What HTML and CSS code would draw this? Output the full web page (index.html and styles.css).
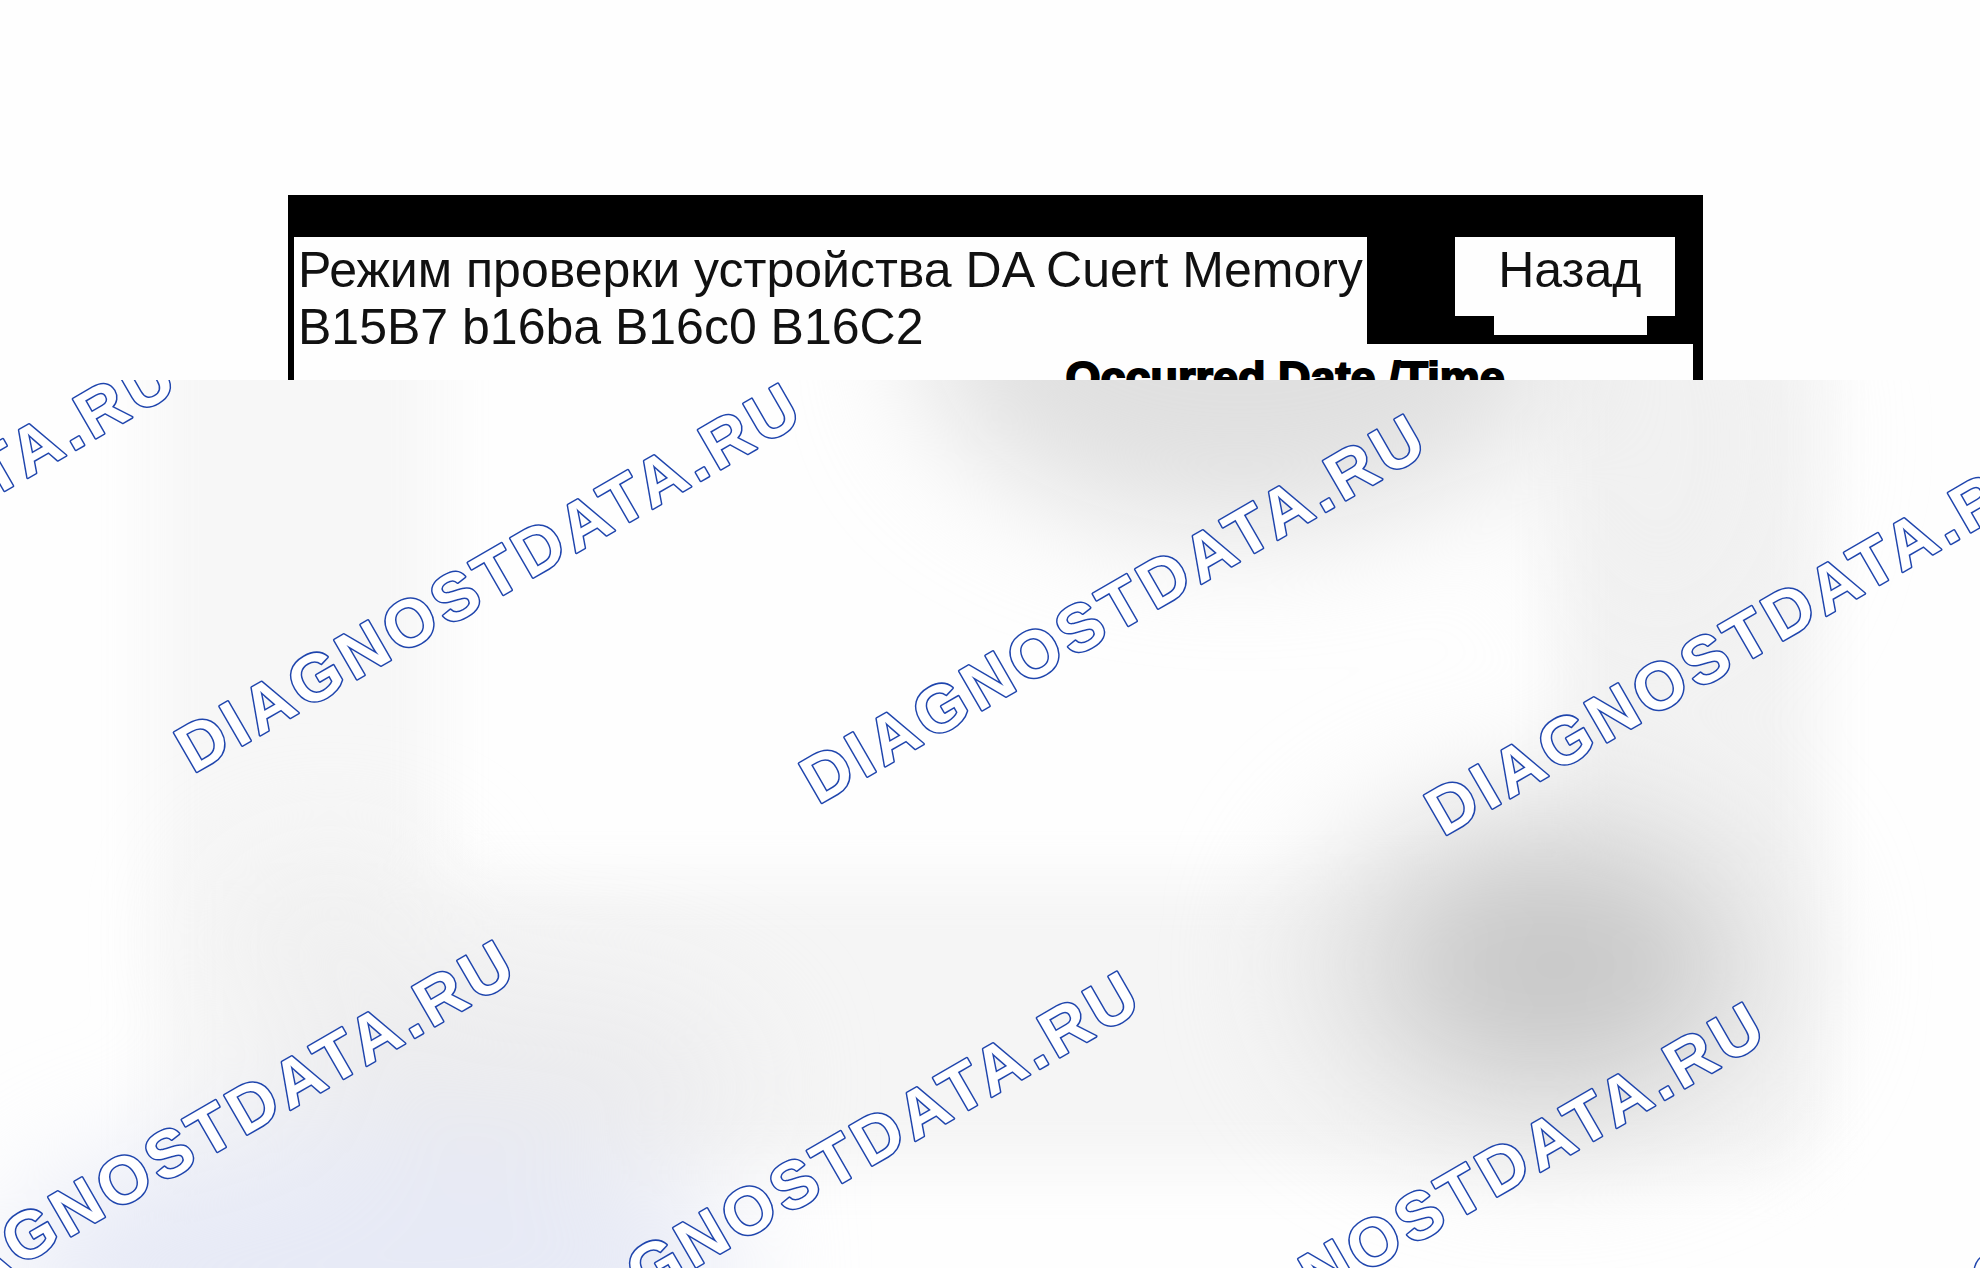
FILE: index.html
```html
<!DOCTYPE html>
<html lang="ru">
	<head>
		<title>Режим проверки устройства</title>
		<meta charset="utf-8" />
		<link rel="stylesheet" href="styles.css">
	</head>
	<body>
		<header class="top">
			<div class="screen">
				<div class="bar">
					<h1 class="title">Режим проверки устройства DA Cuert Memory<br>B15B7 b16ba B16c0 B16C2</h1>
					<button type="button" class="back">Назад</button>
				</div>
				<h2 class="occurred">Occurred Date /Time</h2>
			</div>
		</header>
		<main class="preview">
			<svg class="haze" viewBox="0 0 1980 888" preserveAspectRatio="none" aria-hidden="true">
				<filter id="soft" x="-50%" y="-50%" width="200%" height="200%" color-interpolation-filters="sRGB"><feGaussianBlur stdDeviation="26" /></filter>
				<filter id="wide" x="-100%" y="-100%" width="300%" height="300%" color-interpolation-filters="sRGB"><feGaussianBlur stdDeviation="60" /></filter>
				<g filter="url(#soft)">
					<rect x="150" y="-80" width="290" height="1100" fill="#f7f7f7" />
					<rect x="1560" y="-80" width="260" height="840" fill="#f3f3f3" />
					<rect x="240" y="500" width="1560" height="290" fill="#f5f5f5" />
				</g>
				<g filter="url(#wide)">
					<ellipse cx="1240" cy="-40" rx="320" ry="190" fill="#e0e0e0" />
					<ellipse cx="1660" cy="60" rx="140" ry="220" fill="#eeeeee" opacity="0.4" />
					<ellipse cx="330" cy="560" rx="110" ry="80" fill="#f0f0f0" />
					<ellipse cx="520" cy="700" rx="230" ry="90" fill="#ebebed" />
					<ellipse cx="370" cy="890" rx="370" ry="140" fill="#e7eaf6" />
					<ellipse cx="1545" cy="585" rx="250" ry="180" fill="#e4e4e4" />
					<ellipse cx="1555" cy="585" rx="150" ry="110" fill="#c8c8c8" />
				</g>
			</svg>
			<svg class="marks" width="1980" height="888">
				<text transform="translate(-432 363) rotate(-30)">DIAGNOSTDATA.RU</text>
				<text transform="translate(193 394) rotate(-30)">DIAGNOSTDATA.RU</text>
				<text transform="translate(818 425) rotate(-30)">DIAGNOSTDATA.RU</text>
				<text transform="translate(1443 457) rotate(-30)">DIAGNOSTDATA.RU</text>
				<text transform="translate(-93 951) rotate(-30)">DIAGNOSTDATA.RU</text>
				<text transform="translate(532 982) rotate(-30)">DIAGNOSTDATA.RU</text>
				<text transform="translate(1157 1013) rotate(-30)">DIAGNOSTDATA.RU</text>
				<text transform="translate(1782 1045) rotate(-30)">DIAGNOSTDATA.RU</text>
			</svg>
		</main>
	</body>
</html>
```
FILE: styles.css
```css
* {
	box-sizing: border-box;
}
body {
	margin: 0;
	min-height: 100vh;
	display: flex;
	flex-direction: column;
	background: #fefefe;
	color: #111;
	font-family: "Liberation Sans", Arial, sans-serif;
}
.top {
	height: 380px;
	padding: 195px 14% 0 288px;
	overflow: hidden;
}
.screen {
	height: 240px;
	border: solid #000;
	border-width: 42px 10px 0 6px;
}
.bar {
	display: flex;
	justify-content: space-between;
	height: 107px;
	padding-right: 18px;
	background: #000;
}
.title {
	margin: 0;
	padding: 5px 4px 0 4px;
	background: #fefefe;
	font-size: 50px;
	font-weight: normal;
	line-height: 57px;
	white-space: nowrap;
}
.back {
	position: relative;
	width: 220px;
	height: 79px;
	padding: 0 0 14px 10px;
	border: 0;
	background: #fefefe;
	color: #111;
	font-family: inherit;
	font-size: 50px;
}
/* lower step of the button */
.back::after {
	content: "";
	position: absolute;
	left: 39px;
	right: 28px;
	top: 79px;
	height: 19px;
	background: #fefefe;
}
.occurred {
	margin: 0;
	padding: 8px 188px 0 0;
	color: #000;
	font-size: 45px;
	line-height: 52px;
	text-align: right;
	-webkit-text-stroke: 2px #000;
}
.preview {
	position: relative;
	flex: 1;
	min-height: 888px;
	overflow: hidden;
}
.haze, .marks {
	position: absolute;
	left: 0;
	top: 0;
}
.haze {
	width: 100%;
	height: 100%;
}
.marks text {
	fill: #fff;
	stroke: #1f45ad;
	stroke-width: 3px;
	stroke-linejoin: round;
	paint-order: stroke;
	font-size: 66px;
	font-weight: bold;
	letter-spacing: 5px;
}
```
